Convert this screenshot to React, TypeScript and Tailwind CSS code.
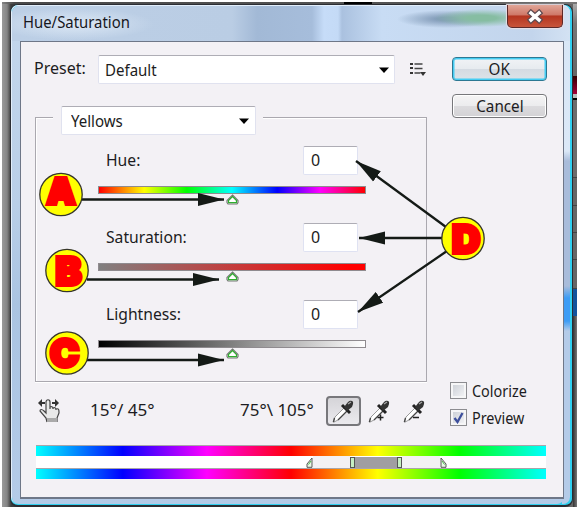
import React, { useState } from 'react';

const HUES = 'bg-[linear-gradient(90deg,#00ffff,#0000ff_17%,#ff00ff_33.5%,#ff0000_50%,#ffff00_67%,#00ff00_83%,#00ffff)]';

const sliders = [
  {
    label: 'Hue:',
    track: 'bg-[linear-gradient(90deg,#ff0000,#ffff00_17%,#00ff00_33%,#00ffff_50%,#0000ff_67%,#ff00ff_83%,#ff0000)]',
  },
  { label: 'Saturation:', track: 'bg-[linear-gradient(90deg,#808080,#ff0000_94%)]' },
  { label: 'Lightness:', track: 'bg-[linear-gradient(90deg,#000,#fff)]' },
];

export default function App() {
  const [colorize, setColorize] = useState(false);
  const [preview, setPreview] = useState(true);

  return (
    <div className="relative h-[509px] w-[579px] overflow-hidden bg-white p-[2px] font-['Noto_Sans','Open_Sans',sans-serif] text-[16px] leading-none text-[#1c1c22]">
      <div className="flex h-[505px] flex-col bg-[linear-gradient(90deg,#9a9a9a,#858585_5px,#3c3c3c_9px,#555_50%,#666)]">
        <div className="flex h-[2px] bg-[linear-gradient(90deg,#858585,#4a4a4a_12px,#555_75%,#777)]">
          <div className="ml-[342px] h-full w-[28px] bg-black" />
        </div>
        <div className="flex min-h-0 flex-1">
          <div className="w-[8px]" />
          <Dialog>
            <div className="flex h-[391px]">
              <div className="w-[406px] pt-[13px] pl-[14px]">
                <PresetRow />
                <ChannelGroup />
                <ToolRow />
              </div>
              <div className="flex flex-1 flex-col pt-[15px] pl-[25px]">
                <DialogButton primary>OK</DialogButton>
                <DialogButton className="mt-[13px]">Cancel</DialogButton>
                <div className="mt-[264px] -ml-[2px] flex flex-col gap-[10px]">
                  <Checkbox label="Colorize" checked={colorize} onChange={setColorize} />
                  <Checkbox label="Preview" checked={preview} onChange={setPreview} />
                </div>
              </div>
            </div>
            <HueStrip />
          </Dialog>
          <div className="flex flex-1 flex-col bg-[#666]">
            <div className="h-[72px] bg-[linear-gradient(#aaa,#777_20px,#666)]" />
            <div className="h-[18px] bg-[linear-gradient(#300,#a3003a)]" />
            <div className="h-[6px] border-b-2 border-black bg-[#bbb]" />
            <div className="h-[78px] border-b border-[#444] bg-[#6c6c6c]" />
            <div className="h-[28px] border-b border-[#444]" />
            <div className="h-[27px] border-b border-[#444]" />
            <div className="h-[27px] border-b border-[#444]" />
            <div className="h-[29px] border-b border-[#444]" />
            <div className="h-[27px] bg-[#12539c]" />
            <div className="flex-1 bg-[linear-gradient(90deg,#333,#777)]" />
          </div>
        </div>
      </div>
      <Callouts />
    </div>
  );
}

function Dialog({ children }: { children: React.ReactNode }) {
  return (
    <div className="flex w-[563px] flex-col rounded-[8px] border border-b-2 border-[#2b2d33] bg-[#30d0f0]">
      <div className="mr-[2px] mb-px flex flex-1 flex-col rounded-[7px] border border-r-0 border-b-0 border-[#e2eefa] bg-[linear-gradient(180deg,#d8e6f6,#dbe8f7_145px,#a9bcda_155px,#a9bcda_280px,#3d9cf5_292px,#3d9cf5_315px,#b4cbe8_325px)] bg-[length:8px_100%] bg-right bg-no-repeat">
        <div className="mr-[6px] flex flex-1 flex-col rounded-[7px] bg-[linear-gradient(180deg,#c4d7ec,#b9cfe8_40%,#aac4e2_60%,#b4cbe8)] pb-[5px] pl-[8px]">
          <header className="-mr-[6px] -ml-[8px] flex h-[35px] items-start justify-between rounded-t-[7px] bg-[radial-gradient(ellipse_48px_9px_at_470px_12px,#86bda2_30%,transparent),radial-gradient(ellipse_50px_9px_at_435px_13px,#849dba_20%,transparent),radial-gradient(ellipse_80px_16px_at_62px_18px,#dce8f5,transparent),linear-gradient(90deg,#bccfe6,#bacde4_220px,#a2b9d6_245px,#a6bddb_300px,#c6dcf8_312px,#c4daf6_326px,#aac1df_330px,#c8dcf4_370px,#c3d5ec_520px,#d3e2f3)] pr-[7px] pl-[11px]">
            <h1 className="origin-left scale-x-[0.93] pt-[8px] text-[16px] text-[#17171d]">Hue/Saturation</h1>
            <button
              type="button"
              aria-label="Close"
              className="-mt-px flex h-[23px] w-[56px] items-center justify-center rounded-b-[5px] border border-t-0 border-[#5c2a2a] bg-[linear-gradient(#e0a597,#cf7868_45%,#b43520_50%,#c8543a)] shadow-[0_0_1px_1px_#e9dfe6]"
            >
              <svg width="18" height="15" viewBox="0 0 18 15" fill="none">
                <path d="M5 4l8 7M13 4l-8 7" stroke="#5d4a50" strokeWidth="6" strokeLinecap="square" />
                <path d="M5 4l8 7M13 4l-8 7" stroke="#fff" strokeWidth="3.500" strokeLinecap="square" />
              </svg>
            </button>
          </header>
          <main className="flex flex-1 flex-col border border-b-2 border-[#6e7788] bg-[#f3f1f5]">{children}</main>
        </div>
      </div>
    </div>
  );
}

function Caret() {
  return (
    <svg width="10" height="6" viewBox="0 0 10 6">
      <path d="M0 .5h10L5 6z" fill="#000" />
    </svg>
  );
}

function Select({ value, className }: { value: string; className: string }) {
  return (
    <button
      type="button"
      className={`flex h-[29px] items-center justify-between rounded-[2px] border border-[#e0e2ef] border-t-[#aeadb5] bg-white ${className}`}
    >
      <span className="origin-left scale-x-[0.94]">{value}</span>
      <Caret />
    </button>
  );
}

function PresetRow() {
  return (
    <div className="flex h-[29px] items-center">
      <span className="-ml-px w-[64px] pb-[3px]">
        <span className="inline-block origin-left">Preset:</span>
      </span>
      <Select value="Default" className="w-[297px] pr-[5px] pl-[6px]" />
      <svg className="ml-[15px] shrink-0" width="17" height="15" viewBox="0 0 17 15">
        <path d="M0 1h3v2H0zM0 5h3v2H0zM0 10h3v2H0z" fill="#333" />
        <path d="M4.500 2h8M4.500 6.500h8M4.500 11h6" stroke="#444" strokeWidth="1.300" />
        <path d="M10 10h6l-3 4z" fill="#333" />
      </svg>
    </div>
  );
}

function ChannelGroup() {
  return (
    <section className="mt-[33px] h-[265px] w-[392px] border border-[#aaa8af] shadow-[inset_1px_1px_0_#fff,0_1px_0_#fff]">
      <div className="-mt-[12px] ml-[17px] w-[210px] bg-[#f3f1f5] pl-[8px]">
        <Select value="Yellows" className="w-[195px] pr-[6px] pl-[9px]" />
      </div>
      <div className="mt-[11px] pl-[62px]">
        {sliders.map((s) => (
          <SliderRow key={s.label} label={s.label} track={s.track} />
        ))}
      </div>
    </section>
  );
}

function SliderRow({ label, track }: { label: string; track: string }) {
  return (
    <div className="h-[77px] w-[268px]">
      <div className="flex h-[29px] items-center pl-[8px]">
        <span className="w-[197px] pb-[2px]">
          <span className="inline-block origin-left scale-x-[0.98]">{label}</span>
        </span>
        <input
          defaultValue="0"
          aria-label={label}
          className="h-[29px] w-[55px] rounded-[2px] border border-[#dfe2f2] border-t-[#aeadb5] bg-white pb-[2px] pl-[7px] outline-none"
        />
      </div>
      <div className={`mt-[11px] h-[8px] border border-[#8f8b8f] ${track}`} />
      <Thumb />
    </div>
  );
}

function Thumb() {
  return (
    <svg className="mx-auto" width="13" height="11" viewBox="0 0 13 11">
      <path d="M6.500 1L12 6.500V8.500L11 10H2L1 8.500V6.500z" fill="#fff" stroke="#777" strokeWidth="1.200" />
      <path d="M6.500 2.500L2.500 6.500V8.700H10.500V6.500z" fill="#fff" stroke="#2fae2f" strokeWidth="1.200" />
    </svg>
  );
}

function ToolRow() {
  return (
    <div className="mt-[14px] flex h-[30px] items-center">
      <svg className="ml-[3px]" width="25" height="26" viewBox="0 0 25 26">
        <path d="M9 24l-1-4-6-7c0-2 2-2 4 0l2 2V4c0-3 4-3 4 0v5c3-1 5 0 6 1 3 1 3 3 3 5l-2 5v4z" fill="#e9e9e9" />
        <path d="M9 24l-1-4-6-7c0-2 2-2 4 0l2 2V4c0-3 4-3 4 0v7m0-2c2-1 3 0 3 2m0-1c2-1 3 0 3 2m0-1c3-1 3 1 3 4l-2 5v4" fill="none" stroke="#444" strokeWidth="1.200" />
        <path d="M9 20h10v4H9z" fill="#aaa" />
        <path d="M1 5h6M14 5h6" stroke="#333" strokeWidth="1.800" />
        <path d="M0 5l4-4v8zM21 5l-4-4v8z" fill="#333" />
      </svg>
      <span className="ml-[27px] w-[150px] pb-[2px]">
        <span className="inline-block origin-left scale-x-[1.07]">15°/ 45°</span>
      </span>
      <span className="w-[86px] pb-[2px] whitespace-nowrap">
        <span className="inline-block origin-left scale-x-[1.06]">75°\ 105°</span>
      </span>
      <button
        type="button"
        className="flex h-[30px] w-[35px] shrink-0 items-center justify-center rounded-[4px] border-2 border-[#77777b] bg-[linear-gradient(#d5d4d8,#ebeaee)]"
      >
        <Dropper />
      </button>
      <div className="ml-[7px] flex shrink-0 gap-[12px]">
        <Dropper sign="M9.500 18.500h6M12.500 15.500v6" />
        <Dropper sign="M10 18.500h6" />
      </div>
    </div>
  );
}

function Dropper({ sign }: { sign?: string }) {
  return (
    <svg className="shrink-0" width="23" height="24" viewBox="0 0 23 24">
      <path d="M1 23l2-5L12 9l3 3L6 21l-4 2z" fill="#fff" stroke="#999" />
      <path d="M1.500 23l1-4M15 12L6 21" stroke="#444" strokeWidth="1.300" fill="none" />
      <path d="M10 6l8 8" stroke="#222" strokeWidth="3" />
      <path d="M12 8l4-5c2-2 6-2 5 2l-1 3-5 4z" fill="#333" />
      <path d="M16 5l3-2" stroke="#aaa" strokeWidth="1.200" />
      {sign && <path d={sign} stroke="#222" strokeWidth="1.500" />}
    </svg>
  );
}

function DialogButton({
  primary,
  className = '',
  children,
}: {
  primary?: boolean;
  className?: string;
  children: React.ReactNode;
}) {
  return (
    <button
      type="button"
      className={`flex h-[24px] w-[95px] items-center justify-center rounded-[4px] border ${
        primary
          ? 'border-[#2c7893] bg-[linear-gradient(#f1f3f6,#e7ebef_48%,#d5dbe2_52%,#dce3e8)] shadow-[inset_0_0_0_1.5px_#45cdf3]'
          : 'border-[#77777b] bg-[linear-gradient(#f5f4f5,#ececee_48%,#dcdbde_52%,#d3d2d5)] shadow-[inset_0_0_0_1px_#fff]'
      } ${className}`}
    >
      <span className="inline-block scale-x-[0.95]">{children}</span>
    </button>
  );
}

function Checkbox({
  label,
  checked,
  onChange,
}: {
  label: string;
  checked: boolean;
  onChange: (v: boolean) => void;
}) {
  return (
    <label className="flex h-[17px] items-center">
      <input type="checkbox" className="sr-only" checked={checked} onChange={(e) => onChange(e.target.checked)} />
      <span className="flex h-[17px] w-[17px] shrink-0 items-center justify-center border border-[#8c8c90] bg-[linear-gradient(135deg,#c8ccd3,#f7f7f9)] shadow-[inset_0_0_0_2px_#f6f6f7]">
        {checked && (
          <svg width="11" height="12" viewBox="0 0 11 12" fill="none">
            <path d="M1.500 6l3 4L9.500 1" stroke="#3d4f9c" strokeWidth="2.300" />
          </svg>
        )}
      </span>
      <span className="ml-[5px] inline-block origin-left scale-x-[0.9]">{label}</span>
    </label>
  );
}

function HueStrip() {
  return (
    <div className="mt-[12px] ml-[15px] w-[510px]">
      <div className={`h-[11px] border-t border-[#a9a5a9] ${HUES}`} />
      <div className="flex h-[12px] items-center bg-white">
        <div className="w-[270px]" />
        <RangeStop />
        <div className="h-full w-[37px] bg-[#f3f1f5]" />
        <div className="h-[11px] w-[5px] border border-[#555] bg-[#c5efc3]" />
        <div className="h-[11px] w-[42px] bg-[#a09ea2]" />
        <div className="h-[11px] w-[5px] border border-[#555] bg-[#c5efc3]" />
        <div className="h-full w-[38px] bg-[#f3f1f5]" />
        <RangeStop flip />
      </div>
      <div className={`h-[11px] border-t border-[#a9a5a9] ${HUES}`} />
    </div>
  );
}

function RangeStop({ flip }: { flip?: boolean }) {
  return (
    <svg className={flip ? '-scale-x-100' : ''} width="7" height="11" viewBox="0 0 7 11">
      <path d="M6 1v9.300H1V7z" fill="#e9f8e7" stroke="#555" />
      <path d="M5 4L2.500 7.500" stroke="#45b545" />
    </svg>
  );
}

const arrows = [
  { from: [82, 199.5], to: [224, 199.5] },
  { from: [87, 279.5], to: [219, 279.5] },
  { from: [87, 360], to: [224, 360] },
  { from: [446, 227], to: [356, 161] },
  { from: [442, 238], to: [359, 238] },
  { from: [447, 251], to: [358, 312] },
];

const badges = [
  { letter: 'A', x: 61, y: 194.5, dx: 0, dy: 9.5, size: 36 },
  { letter: 'B', x: 67, y: 270.5, dx: 1.5, dy: 14, size: 39 },
  { letter: 'C', x: 67, y: 353, dx: -2.5, dy: 13.5, size: 39 },
  { letter: 'D', x: 463, y: 238.5, dx: 3, dy: 14, size: 39 },
];

function Callouts() {
  return (
    <svg className="pointer-events-none absolute inset-0" width="579" height="509" viewBox="0 0 579 509">
      <defs>
        <marker id="head" markerUnits="userSpaceOnUse" markerWidth="27" markerHeight="14" refX="26" refY="7" orient="auto">
          <path d="M0 0.500L26 7L0 13.500z" fill="#141a16" />
        </marker>
      </defs>
      {arrows.map(({ from, to }) => (
        <line
          key={`${to[0]}-${to[1]}`}
          x1={from[0]}
          y1={from[1]}
          x2={to[0]}
          y2={to[1]}
          stroke="#141a16"
          strokeWidth="2.300"
          markerEnd="url(#head)"
        />
      ))}
      {badges.map(({ letter, x, y, dx, dy, size }) => (
        <g key={letter}>
          <circle cx={x} cy={y} r="21.200" fill="#ffff00" stroke="#35352a" strokeWidth="1.300" />
          <text
            x={x + dx}
            y={y + dy}
            textAnchor="middle"
            fontFamily="Inter, 'Liberation Sans', sans-serif"
            fontWeight="900"
            fontSize={size}
            fill="#ff0000"
            stroke="#ff0000"
            strokeWidth="4"
          >
            {letter}
          </text>
        </g>
      ))}
    </svg>
  );
}
